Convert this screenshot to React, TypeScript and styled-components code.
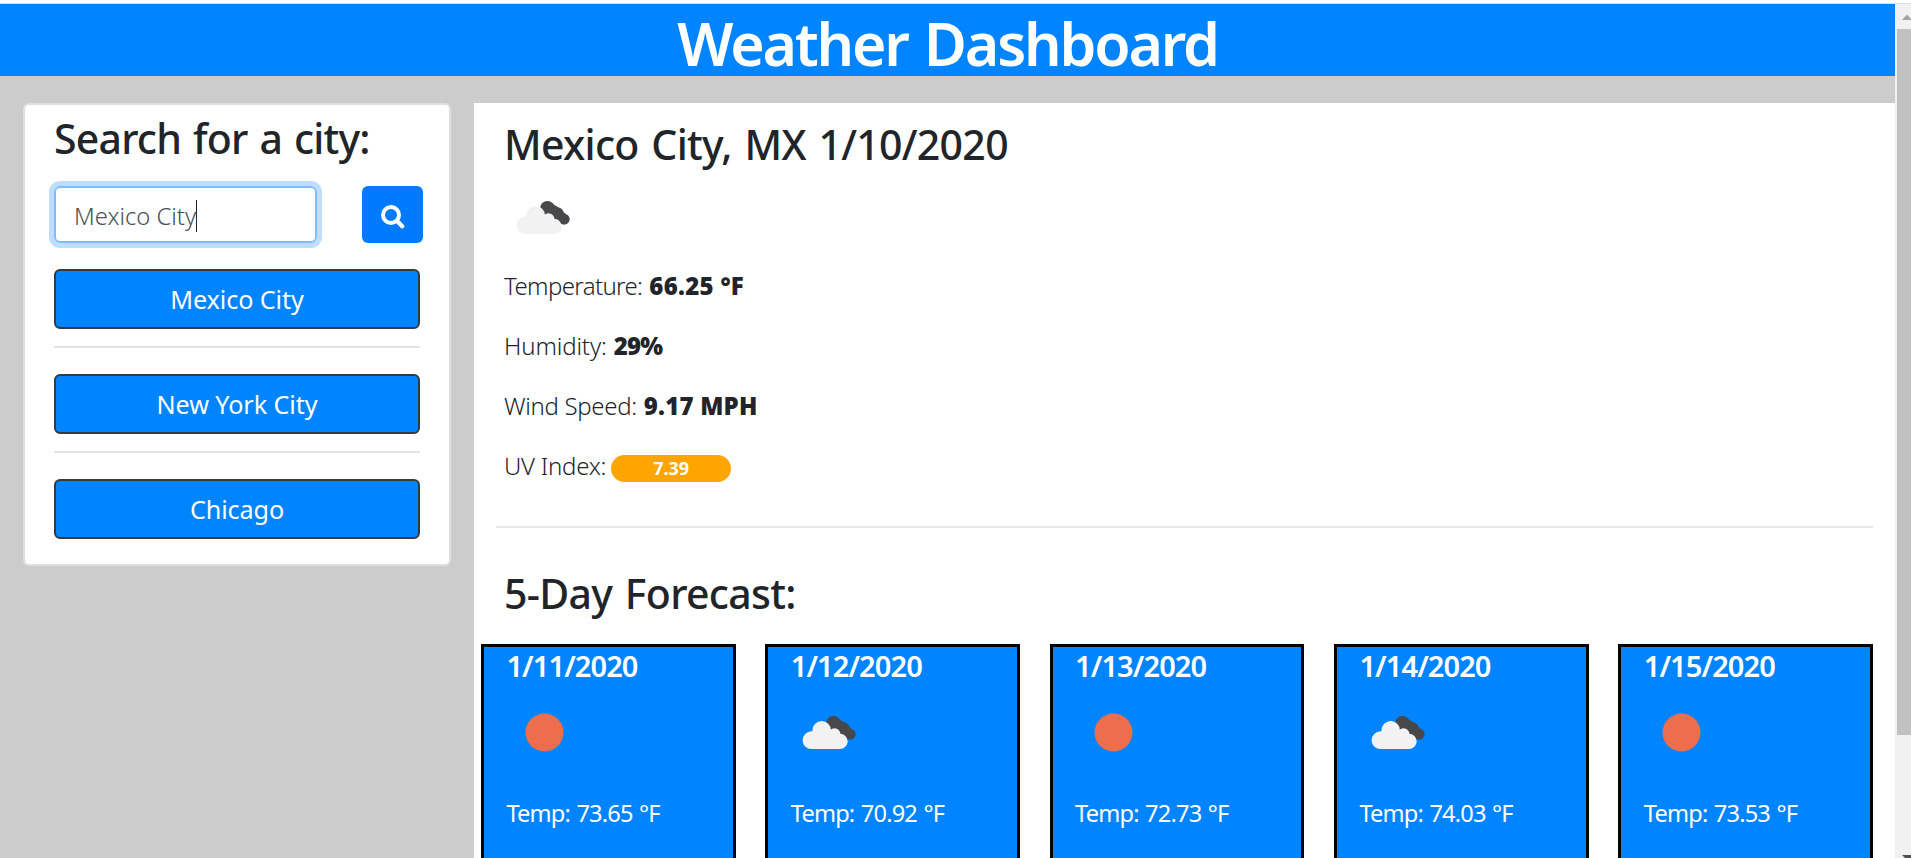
import React from 'react';
import styled, { createGlobalStyle } from 'styled-components';

const Global = createGlobalStyle`
  *, *::before, *::after { box-sizing: border-box; }
  html, body { margin: 0; overflow: hidden; background: #fff; }
  body { font-family: "Noto Sans", "Open Sans", sans-serif; color: #212529; }
  h1, h2, h3, p { margin: 0; }
`;

const Window = styled.div`
  display: flex;
  height: 858px;
  padding-top: 3px;
  overflow: hidden;
`;

const Page = styled.div`
  flex: 1;
  min-width: 0;
  display: flex;
  flex-direction: column;
  border-top: 1px solid #dcdcdc;
  background: #ccc;
`;

const Header = styled.header`
  flex: none;
  height: 72px;
  background: #0084ff;
  text-align: center;
`;

const Title = styled.h1`
  font-size: 59px;
  font-weight: 600;
  line-height: 78px;
  letter-spacing: -2.2px;
  word-spacing: 3px;
  color: #fff;
`;

const Main = styled.main`
  flex: 1;
  min-height: 0;
  display: flex;
  align-items: flex-start;
  gap: 23px;
  padding: 27px 0 0 23px;
`;

const SearchCard = styled.aside`
  flex: none;
  width: 428px;
  padding: 0 29px 25px;
  border: 2px solid #dfdfdf;
  border-radius: 6px;
  background: #fff;
`;

const SearchTitle = styled.h2`
  height: 65px;
  font-size: 41px;
  font-weight: 500;
  line-height: 67px;
  letter-spacing: -0.8px;
  word-spacing: 2px;
  white-space: nowrap;
`;

const SearchRow = styled.div`
  display: flex;
  gap: 45px;
  margin: 16px 0 26px;
`;

const SearchField = styled.div`
  flex: none;
  display: flex;
  align-items: center;
  width: 263px;
  height: 57px;
  padding: 2px 18px 0;
  border: 2px solid #80bdff;
  border-radius: 6px;
  box-shadow: 0 0 0 5px #bfdeff;
  font-size: 23.8px;
  font-weight: 300;
  color: #495057;
`;

const Caret = styled.span`
  width: 1px;
  height: 32px;
  background: #212529;
`;

const SearchButton = styled.button`
  flex: none;
  display: flex;
  align-items: center;
  justify-content: center;
  width: 61px;
  height: 57px;
  padding: 5px 0 0 1px;
  border: 0;
  border-radius: 6px;
  background: #007bff;
`;

const CityButton = styled.button`
  display: block;
  width: 100%;
  height: 60px;
  padding: 0;
  border: 2px solid #343a40;
  border-radius: 6px;
  background: #0084ff;
  color: #fff;
  font-family: inherit;
  font-size: 25.2px;
  line-height: 56px;
  letter-spacing: -0.1px;
`;

const CityRule = styled.hr`
  height: 2px;
  margin: 17px 0 26px;
  border: 0;
  background: #e3e3e3;
`;

const Panel = styled.section`
  flex: 1;
  align-self: stretch;
  min-width: 0;
  padding: 0 22px 0 7px;
  background: #fff;
`;

const PanelTitle = styled.h2`
  height: 77px;
  padding-left: 23px;
  font-size: 41px;
  font-weight: 500;
  line-height: 82px;
  letter-spacing: -0.7px;
  word-spacing: 2.7px;
`;

const Current = styled.div`
  padding-left: 23px;
`;

const Icon = styled.svg`
  display: block;
  width: 75px;
  height: 75px;
`;

const CurrentIcon = styled.div`
  padding: 0 0 1px 1px;
`;

const Reading = styled.p<{ $spacing: number }>`
  display: flex;
  align-items: baseline;
  height: 60px;
  font-size: 24px;
  font-weight: 300;
  line-height: 60px;
  letter-spacing: ${(p) => p.$spacing}px;
`;

const Value = styled.strong<{ $spacing: number }>`
  margin-left: 7px;
  font-weight: 900;
  letter-spacing: ${(p) => p.$spacing}px;
`;

const UvBadge = styled.span`
  width: 120px;
  height: 27px;
  margin-left: 5px;
  border-radius: 14px;
  background: #ffa500;
  color: #fff;
  font-size: 18px;
  font-weight: 700;
  line-height: 27px;
  letter-spacing: 0;
  text-align: center;
`;

const PanelRule = styled.hr`
  height: 2px;
  margin: 30px 0 24px 15px;
  border: 0;
  background: #e8e8e8;
`;

const Forecast = styled.div`
  display: grid;
  grid-template-columns: repeat(5, 1fr);
  gap: 29.7px;
  margin-top: 15px;
`;

const DayCard = styled.article`
  height: 320px;
  padding-left: 22.4px;
  border: 3px solid #000;
  background: #0084ff;
  color: #fff;
`;

const DayDate = styled.h3`
  font-size: 29px;
  font-weight: 600;
  line-height: 37px;
  letter-spacing: -0.9px;
`;

const DayIcon = styled.div`
  height: 111px;
  padding: 11px 0 0 0.6px;
`;

const DayTemp = styled.p`
  font-size: 23.6px;
  line-height: 36px;
  letter-spacing: -0.8px;
  word-spacing: 1px;
`;

const Scrollbar = styled.div`
  flex: none;
  display: flex;
  flex-direction: column;
  justify-content: space-between;
  width: 16px;
  border-top: 1px solid #dcdcdc;
  background: #f1f1f1;
`;

const Thumb = styled.div`
  height: 706px;
  margin: 0 0 120px 2px;
  background: #c1c1c1;
`;

const Arrow = styled.svg`
  display: block;
  flex: none;
  width: 16px;
`;

function Clouds() {
  return (
    <Icon viewBox="-0.7 0 75 75" aria-label="broken clouds">
      <g fill="#48484a">
        <circle cx="41.7" cy="28.2" r="7.3" />
        <circle cx="52.3" cy="32.8" r="5.4" />
        <circle cx="58.6" cy="39.2" r="5.4" />
        <path d="M36 32 L42 21 L53 27.5 L60 34 L58.6 44.6 L52 43 Z" />
      </g>
      <g fill="#f2f2f2">
        <circle cx="19.8" cy="45.2" r="8.9" />
        <circle cx="30" cy="35.2" r="9.2" />
        <circle cx="42.8" cy="39.2" r="6" />
        <circle cx="48.3" cy="46.4" r="7.7" />
        <path d="M19.8 54.1 V36.4 H21 L38 34 L49 42 V54.1 Z" />
      </g>
    </Icon>
  );
}

function Sun() {
  return (
    <Icon viewBox="0 0 75 75" aria-label="clear sky">
      <circle cx="37.5" cy="37.5" r="19" fill="#ec6e4c" />
    </Icon>
  );
}

const cities = ['Mexico City', 'New York City', 'Chicago'];

const days = [
  { date: '1/11/2020', temp: '73.65', sunny: true },
  { date: '1/12/2020', temp: '70.92', sunny: false },
  { date: '1/13/2020', temp: '72.73', sunny: true },
  { date: '1/14/2020', temp: '74.03', sunny: false },
  { date: '1/15/2020', temp: '73.53', sunny: true },
];

export default function App() {
  return (
    <Window>
      <Global />
      <Page>
        <Header>
          <Title>Weather Dashboard</Title>
        </Header>
        <Main>
          <SearchCard>
            <SearchTitle>Search for a city:</SearchTitle>
            <SearchRow>
              <SearchField>
                Mexico City
                <Caret />
              </SearchField>
              <SearchButton aria-label="Search">
                <svg width="24" height="24" viewBox="0 0 24 24" fill="none" stroke="#fff">
                  <circle cx="10" cy="10" r="8" strokeWidth="4" />
                  <path d="M15.8 15.8 L21.2 21.2" strokeWidth="4.2" strokeLinecap="round" />
                </svg>
              </SearchButton>
            </SearchRow>
            {cities.map((city, i) => (
              <React.Fragment key={city}>
                {i > 0 && <CityRule />}
                <CityButton>{city}</CityButton>
              </React.Fragment>
            ))}
          </SearchCard>
          <Panel>
            <PanelTitle>Mexico City, MX 1/10/2020</PanelTitle>
            <Current>
              <CurrentIcon>
                <Clouds />
              </CurrentIcon>
              <Reading $spacing={-0.62}>
                Temperature: <Value $spacing={0.27}>66.25 °F</Value>
              </Reading>
              <Reading $spacing={-0.14}>
                Humidity: <Value $spacing={-0.8}>29%</Value>
              </Reading>
              <Reading $spacing={-0.32}>
                Wind Speed: <Value $spacing={0.2}>9.17 MPH</Value>
              </Reading>
              <Reading $spacing={-0.25}>
                UV Index: <UvBadge>7.39</UvBadge>
              </Reading>
            </Current>
            <PanelRule />
            <PanelTitle>5-Day Forecast:</PanelTitle>
            <Forecast>
              {days.map((day) => (
                <DayCard key={day.date}>
                  <DayDate>{day.date}</DayDate>
                  <DayIcon>{day.sunny ? <Sun /> : <Clouds />}</DayIcon>
                  <DayTemp>Temp: {day.temp} °F</DayTemp>
                </DayCard>
              ))}
            </Forecast>
          </Panel>
        </Main>
      </Page>
      <Scrollbar>
        <Arrow height="25" viewBox="0 0 16 25">
          <path d="M7 16 L12 10.5 L17 16 Z" fill="#a3a3a3" />
        </Arrow>
        <Thumb />
        <Arrow height="3" viewBox="0 0 16 3">
          <path d="M7 0 H16 V3 H10 Z" fill="#505050" />
        </Arrow>
      </Scrollbar>
    </Window>
  );
}
